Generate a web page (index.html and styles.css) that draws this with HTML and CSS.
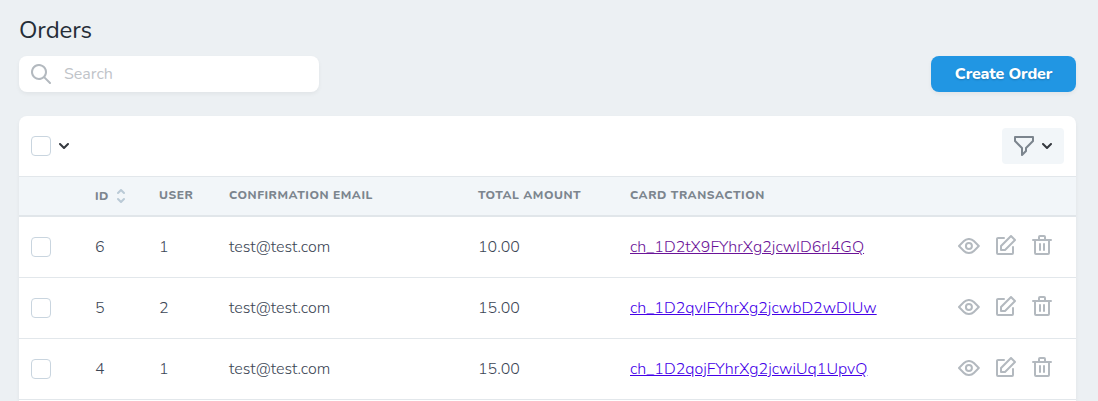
FILE: index.html
```html
<!DOCTYPE html>
<html lang="en">
<head>
<meta charset="utf-8">
<title>Orders</title>
<link rel="stylesheet" href="styles.css">
</head>
<body>
<svg class="sprite" aria-hidden="true">
  <symbol id="search" viewBox="0 0 20 20"><path d="M14.32 12.906l5.387 5.387a1 1 0 0 1-1.414 1.414l-5.387-5.387a8 8 0 1 1 1.414-1.414zM8 14A6 6 0 1 0 8 2a6 6 0 0 0 0 12z"/></symbol>
  <symbol id="filter" viewBox="0 0 20 20"><path d="M.293 5.707A1 1 0 0 1 0 4.999V1A1 1 0 0 1 1 0h18a1 1 0 0 1 1 1v4a1 1 0 0 1-.293.707L13 12.413v2.585a1 1 0 0 1-.293.708l-4 4c-.63.629-1.707.183-1.707-.708v-6.585L.293 5.707zM2 2v2.585l6.707 6.707a1 1 0 0 1 .293.707v4.585l2-2V12a1 1 0 0 1 .293-.707L18 4.585V2H2z"/></symbol>
  <symbol id="chevron" viewBox="0 0 10 6"><path d="M8.293.293a1 1 0 0 1 1.414 1.414l-4 4a1 1 0 0 1-1.414 0l-4-4A1 1 0 0 1 1.707.293L5 3.586 8.293.293z"/></symbol>
  <symbol id="sort" viewBox="0 0 8 14"><path d="M1.707 4.707A1 1 0 0 1 .293 3.293l3-3a1 1 0 0 1 1.414 0l3 3a1 1 0 0 1-1.414 1.414L4 2.414 1.707 4.707zM6.293 9.293a1 1 0 0 1 1.414 1.414l-3 3a1 1 0 0 1-1.414 0l-3-3a1 1 0 0 1 1.414-1.414L4 11.586l2.293-2.293z"/></symbol>
  <symbol id="view" viewBox="0 0 22 16"><path d="M16.56 13.66a8 8 0 0 1-11.32 0L.3 8.7a1 1 0 0 1 0-1.42l4.95-4.95a8 8 0 0 1 11.32 0l4.95 4.95a1 1 0 0 1 0 1.42l-4.95 4.95-.01.01zm-9.9-1.42a6 6 0 0 0 8.48 0L19.38 8l-4.24-4.24a6 6 0 0 0-8.48 0L2.4 8l4.25 4.24h.01zM10.9 12a4 4 0 1 1 0-8 4 4 0 0 1 0 8zm0-2a2 2 0 1 0 0-4 2 2 0 0 0 0 4z"/></symbol>
  <symbol id="edit" viewBox="0 0 20 20"><path d="M4.3 10.3l10-10a1 1 0 0 1 1.4 0l4 4a1 1 0 0 1 0 1.4l-10 10a1 1 0 0 1-.7.3H5a1 1 0 0 1-1-1v-4a1 1 0 0 1 .3-.7zM6 14h2.59l9-9L15 2.41l-9 9V14zm10-2a1 1 0 0 1 2 0v6a2 2 0 0 1-2 2H2a2 2 0 0 1-2-2V4c0-1.1.9-2 2-2h6a1 1 0 1 1 0 2H2v14h14v-6z"/></symbol>
  <symbol id="delete" viewBox="0 0 20 20"><path d="M6 4V2a2 2 0 0 1 2-2h4a2 2 0 0 1 2 2v2h5a1 1 0 0 1 0 2h-1v12a2 2 0 0 1-2 2H4a2 2 0 0 1-2-2V6H1a1 1 0 1 1 0-2h5zM4 6v12h12V6H4zm8-2V2H8v2h4zM8 8a1 1 0 0 1 1 1v6a1 1 0 0 1-2 0V9a1 1 0 0 1 1-1zm4 0a1 1 0 0 1 1 1v6a1 1 0 0 1-2 0V9a1 1 0 0 1 1-1z"/></symbol>
</svg>
<main class="page">
  <h1 class="title">Orders</h1>
  <div class="actions">
    <label class="search"><svg class="icon"><use href="#search"/></svg><span class="search-text">Search</span></label>
    <button class="create">Create Order</button>
  </div>
  <section class="card">
    <div class="toolbar">
      <div class="select-all"><span class="check"></span><svg class="chevron"><use href="#chevron"/></svg></div>
      <button class="filter"><svg class="icon"><use href="#filter"/></svg><svg class="chevron"><use href="#chevron"/></svg></button>
    </div>
    <div class="row head">
      <span></span>
      <span class="sortable">ID<svg class="sort"><use href="#sort"/></svg></span>
      <span class="label">USER</span>
      <span class="label">CONFIRMATION EMAIL</span>
      <span class="label">TOTAL AMOUNT</span>
      <span class="label">CARD TRANSACTION</span>
      <span></span>
    </div>
    <div class="row">
      <span class="check"></span><span>6</span><span>1</span><span>test@test.com</span><span>10.00</span>
      <span><a class="link visited" href="#">ch_1D2tX9FYhrXg2jcwID6rI4GQ</a></span>
      <span class="tools"><svg class="eye"><use href="#view"/></svg><svg class="icon"><use href="#edit"/></svg><svg class="icon"><use href="#delete"/></svg></span>
    </div>
    <div class="row">
      <span class="check"></span><span>5</span><span>2</span><span>test@test.com</span><span>15.00</span>
      <span><a class="link" href="#">ch_1D2qvIFYhrXg2jcwbD2wDIUw</a></span>
      <span class="tools"><svg class="eye"><use href="#view"/></svg><svg class="icon"><use href="#edit"/></svg><svg class="icon"><use href="#delete"/></svg></span>
    </div>
    <div class="row">
      <span class="check"></span><span>4</span><span>1</span><span>test@test.com</span><span>15.00</span>
      <span><a class="link" href="#">ch_1D2qojFYhrXg2jcwiUq1UpvQ</a></span>
      <span class="tools"><svg class="eye"><use href="#view"/></svg><svg class="icon"><use href="#edit"/></svg><svg class="icon"><use href="#delete"/></svg></span>
    </div>
  </section>
</main>
</body>
</html>
```
FILE: styles.css
```css
* { box-sizing: border-box; }
body {
  margin: 0;
  background: #ecf0f3;
  color: #3c4655;
  font: 300 16px/24px Nunito, Lato, sans-serif;
}
svg { display: block; flex: none; fill: currentColor; }
.sprite { display: none; }
.icon { width: 20px; height: 20px; }
.eye { width: 22px; height: 16px; margin-top: 2px; }
.chevron { width: 10px; height: 6px; color: #35393f; }
.sort { width: 8px; height: 14px; color: #bacad6; }
.page { padding: 14px 22px 0 19px; }
.title {
  margin: 0 0 10px;
  font-size: 24px;
  font-weight: 400;
  line-height: 32px;
  letter-spacing: -.1px;
  color: #252d37;
}
.actions { display: flex; justify-content: space-between; margin-bottom: 24px; }
.search {
  display: flex;
  align-items: center;
  gap: 13px;
  width: 300px;
  height: 36px;
  padding: 0 12px;
  border-radius: 8px;
  background: #fff;
  box-shadow: 0 2px 4px rgba(0, 0, 0, .05);
  color: #b3b9bf;
}
.search-text { font-weight: 400; color: #bfc4c9; }
button { border: 0; font: inherit; }
.create {
  width: 145px;
  height: 36px;
  padding: 0;
  border-radius: 8px;
  background: #2196e3;
  box-shadow: 0 2px 4px rgba(0, 0, 0, .05);
  color: #fff;
  font-weight: 800;
  letter-spacing: -.15px;
  text-shadow: 0 1px 2px rgba(0, 0, 0, .2);
}
.card {
  padding-bottom: 1px;
  border-radius: 8px 8px 0 0;
  background: #fff;
  box-shadow: 0 2px 4px rgba(0, 0, 0, .05);
}
.toolbar {
  display: flex;
  align-items: center;
  justify-content: space-between;
  height: 60px;
  padding: 0 12px;
}
.select-all { display: flex; align-items: center; gap: 8px; }
.check {
  width: 20px;
  height: 20px;
  border: 1px solid #c9d5df;
  border-radius: 4px;
  background: #fff;
}
.filter {
  display: flex;
  align-items: center;
  gap: 8px;
  width: 62px;
  height: 36px;
  padding: 0 12px;
  border-radius: 4px;
  background: #f2f6f9;
  color: #7c858e;
}
.row {
  display: grid;
  grid-template-columns: 64px 64px 70px 249px 152px 328px 94px;
  align-items: center;
  height: 61px;
  padding: 0 24px 0 12px;
  border-bottom: 1px solid #e2e7eb;
}
.head {
  height: 41px;
  border-top: 1px solid #e2e7eb;
  border-bottom: 2px solid #e1e6ea;
  background: #f2f6f9;
  color: #7c858e;
  font-size: 12px;
  font-weight: 800;
  line-height: 16px;
  letter-spacing: .54px;
}
.label { padding-bottom: 2px; }
.sortable { display: flex; align-items: center; gap: 8px; }
.tools {
  display: flex;
  align-items: center;
  justify-content: space-between;
  padding-bottom: 4px;
  color: #b3b9bf;
}
.link { color: #4400e8; text-decoration: underline; }
.visited { color: #6b1398; }
```
